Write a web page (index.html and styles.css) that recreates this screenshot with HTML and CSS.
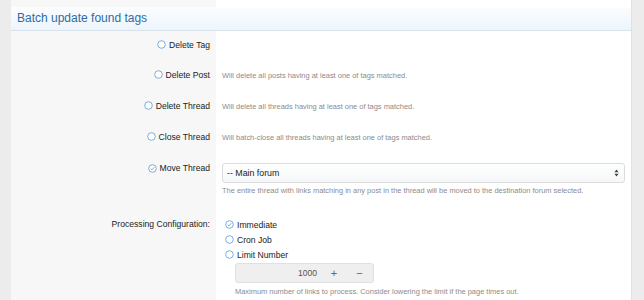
FILE: index.html
```html
<!DOCTYPE html>
<html lang="en">
<head>
    <meta charset="UTF-8">
    <meta name="viewport" content="width=device-width, initial-scale=1.0">
    <title>Batch update found tags</title>
    <link rel="stylesheet" href="styles.css">
</head>
<body>
    <div class="page">
        <h2 class="section-header">Batch update found tags</h2>

        <div class="form-row row-first">
            <div class="form-label">
                <span class="radio"><svg width="9" height="9" viewBox="0 0 9 9"><circle cx="4.5" cy="4.5" r="3.8" /></svg>Delete Tag</span>
            </div>
            <div class="form-field"></div>
        </div>

        <div class="form-row">
            <div class="form-label">
                <span class="radio"><svg width="9" height="9" viewBox="0 0 9 9"><circle cx="4.5" cy="4.5" r="3.8" /></svg>Delete Post</span>
            </div>
            <div class="form-field"><p class="hint">Will delete all posts having at least one of tags matched.</p></div>
        </div>

        <div class="form-row">
            <div class="form-label">
                <span class="radio"><svg width="9" height="9" viewBox="0 0 9 9"><circle cx="4.5" cy="4.5" r="3.8" /></svg>Delete Thread</span>
            </div>
            <div class="form-field"><p class="hint">Will delete all threads having at least one of tags matched.</p></div>
        </div>

        <div class="form-row">
            <div class="form-label">
                <span class="radio"><svg width="9" height="9" viewBox="0 0 9 9"><circle cx="4.5" cy="4.5" r="3.8" /></svg>Close Thread</span>
            </div>
            <div class="form-field"><p class="hint">Will batch-close all threads having at least one of tags matched.</p></div>
        </div>

        <div class="form-row row-top row-move">
            <div class="form-label">
                <span class="radio"><svg width="9" height="9" viewBox="0 0 9 9"><circle cx="4.5" cy="4.5" r="3.8" /><path d="M2.7 4.6 L4 5.9 L6.3 3.2" /></svg>Move Thread</span>
            </div>
            <div class="form-field">
                <div class="select">
                    <span>-- Main forum</span>
                    <svg width="5" height="8" viewBox="0 0 5 8"><path d="M2.5 0.5 L4.6 3.2 L0.4 3.2 Z M2.5 7.5 L4.6 4.8 L0.4 4.8 Z" /></svg>
                </div>
                <p class="hint hint-below">The entire thread with links matching in any post in the thread will be moved to the destination forum selected.</p>
            </div>
        </div>

        <div class="form-row row-top row-config">
            <div class="form-label">Processing Configuration:</div>
            <div class="form-field">
                <ul class="options">
                    <li class="radio"><svg width="9" height="9" viewBox="0 0 9 9"><circle cx="4.5" cy="4.5" r="3.8" /><path d="M2.7 4.6 L4 5.9 L6.3 3.2" /></svg>Immediate</li>
                    <li class="radio"><svg width="9" height="9" viewBox="0 0 9 9"><circle cx="4.5" cy="4.5" r="3.8" /></svg>Cron Job</li>
                    <li class="radio"><svg width="9" height="9" viewBox="0 0 9 9"><circle cx="4.5" cy="4.5" r="3.8" /></svg>Limit Number</li>
                </ul>
                <div class="number-box">
                    <span class="number-value">1000</span>
                    <span class="number-btn">+</span>
                    <span class="number-btn">&minus;</span>
                </div>
                <p class="hint hint-below indent">Maximum number of links to process. Consider lowering the limit if the page times out.</p>
            </div>
        </div>
    </div>
</body>
</html>
```

FILE: styles.css
```css
html, body {
    margin: 0;
    height: 300px;
    overflow: hidden;
}

body {
    background-color: #ececec;
    font-family: "Liberation Sans", Arial, sans-serif;
    color: #222;
}

.page {
    margin: 0 12px 0 11px;
    padding-top: 7px;
    height: 293px;
    background: linear-gradient(to right, #f7f7f7 205px, #fff 205px);
    border-right: 1px solid #e2e2e2;
}

.section-header {
    margin: 0;
    height: 23px;
    line-height: 23px;
    padding-left: 6px;
    font-size: 12px;
    font-weight: normal;
    color: #2f6ba3;
    background: linear-gradient(to bottom, #fbfdfe, #edf5fc);
    border-bottom: 1px solid #d8e2eb;
}

.form-row {
    display: grid;
    grid-template-columns: 205px 1fr;
    height: 31px;
    align-items: center;
}

.row-first {
    height: 29px;
}

.row-top {
    align-items: start;
    height: auto;
}

.form-label {
    text-align: right;
    padding-right: 6px;
    font-size: 8.6px;
}

.form-field {
    padding-left: 6px;
    padding-right: 6px;
}

.radio {
    display: inline-flex;
    align-items: center;
    gap: 3px;
}

.radio svg {
    fill: #fff;
    stroke: #6aa7d9;
    stroke-width: 0.9;
}

.radio svg path {
    fill: none;
    stroke-width: 0.9;
}

.hint {
    margin: 0;
    font-size: 7.45px;
    color: #8c8c8c;
    line-height: 10px;
}

.row-move {
    padding-top: 10px;
    padding-bottom: 4px;
}

.row-move .form-label {
    line-height: 11px;
    padding-top: 0;
}

.select {
    display: flex;
    justify-content: space-between;
    align-items: center;
    height: 18px;
    padding: 0 5px 0 4px;
    font-size: 8.8px;
    background: linear-gradient(to bottom, #fff, #f5f7f9);
    border: 1px solid #dcdcdc;
    border-radius: 3px;
}

.select svg {
    fill: #444;
}

.hint-below {
    margin-top: 3px;
}

.row-config {
    padding-top: 17px;
}

.row-config .form-label {
    line-height: 15px;
}

.options {
    list-style: none;
    margin: 0;
    padding: 0 0 0 3px;
    font-size: 8.6px;
}

.options li {
    display: flex;
    height: 15px;
}

.number-box {
    display: flex;
    width: 137px;
    height: 18px;
    margin: 1px 0 0 13px;
    background-color: #efefef;
    border: 1px solid #e0e0e0;
    border-radius: 3px;
    font-size: 8.6px;
    color: #555;
}

.number-value {
    flex: 1;
    text-align: right;
    line-height: 18px;
    padding-right: 5px;
}

.number-btn {
    width: 24px;
    text-align: center;
    line-height: 18px;
    font-size: 11px;
    color: #666;
}

.number-btn:last-child {
    width: 27px;
}

.indent {
    margin-left: 13px;
    margin-top: 4px;
}
```
